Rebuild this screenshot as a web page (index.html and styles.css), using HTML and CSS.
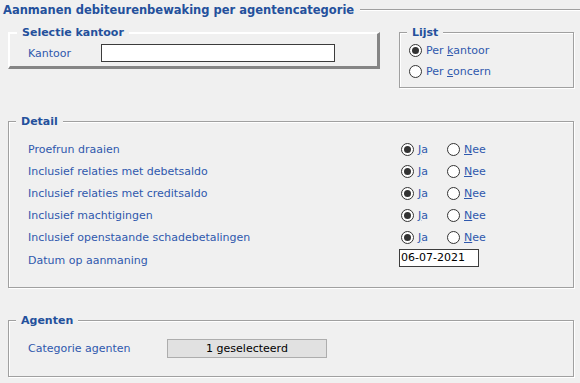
FILE: index.html
```html
<!DOCTYPE html>
<html>
<head>
  <meta charset="utf-8">
  <link rel="stylesheet" href="styles.css">
</head>
<body>
  <div class="window">
    <div class="title-row">
      <span class="title">Aanmanen debiteurenbewaking per agentencategorie</span>
      <span class="title-line"></span>
    </div>

    <div class="top-row">
      <fieldset class="raised selectie">
        <legend>Selectie kantoor</legend>
        <div class="row">
          <span class="label kantoor-label">Kantoor</span>
          <span class="text-input kantoor-input"></span>
        </div>
      </fieldset>

      <fieldset class="group lijst">
        <legend>Lijst</legend>
        <div class="lijst-row"><span class="radio checked"></span><span class="opt">Per <u>k</u>antoor</span></div>
        <div class="lijst-row"><span class="radio"></span><span class="opt">Per <u>c</u>oncern</span></div>
      </fieldset>
    </div>

    <fieldset class="group detail">
      <legend>Detail</legend>
      <div class="detail-row">
        <span class="label detail-label">Proefrun draaien</span>
        <span class="choice"><span class="radio checked"></span><span class="opt"><u>J</u>a</span></span>
        <span class="choice"><span class="radio"></span><span class="opt"><u>N</u>ee</span></span>
      </div>
      <div class="detail-row">
        <span class="label detail-label">Inclusief relaties met debetsaldo</span>
        <span class="choice"><span class="radio checked"></span><span class="opt"><u>J</u>a</span></span>
        <span class="choice"><span class="radio"></span><span class="opt"><u>N</u>ee</span></span>
      </div>
      <div class="detail-row">
        <span class="label detail-label">Inclusief relaties met creditsaldo</span>
        <span class="choice"><span class="radio checked"></span><span class="opt"><u>J</u>a</span></span>
        <span class="choice"><span class="radio"></span><span class="opt"><u>N</u>ee</span></span>
      </div>
      <div class="detail-row">
        <span class="label detail-label">Inclusief machtigingen</span>
        <span class="choice"><span class="radio checked"></span><span class="opt"><u>J</u>a</span></span>
        <span class="choice"><span class="radio"></span><span class="opt"><u>N</u>ee</span></span>
      </div>
      <div class="detail-row">
        <span class="label detail-label">Inclusief openstaande schadebetalingen</span>
        <span class="choice"><span class="radio checked"></span><span class="opt"><u>J</u>a</span></span>
        <span class="choice"><span class="radio"></span><span class="opt"><u>N</u>ee</span></span>
      </div>
      <div class="detail-row date-row">
        <span class="label detail-label">Datum op aanmaning</span>
        <span class="text-input date-input">06-07-2021</span>
      </div>
    </fieldset>

    <fieldset class="group agenten">
      <legend>Agenten</legend>
      <div class="agent-row">
        <span class="label agent-label">Categorie agenten</span>
        <span class="select-btn">1 geselecteerd</span>
      </div>
    </fieldset>
  </div>
</body>
</html>
```

FILE: styles.css
```css
* {
  margin: 0;
  padding: 0;
  box-sizing: border-box;
}

body {
  width: 580px;
  height: 383px;
  overflow: hidden;
  background: #f0f0f0;
  font-family: 'DejaVu Sans', Verdana, sans-serif;
  font-size: 11px;
  color: #2f58ad;
}

/* title */
.title-row {
  display: flex;
  align-items: center;
  height: 19px;
  padding-left: 3px;
}

.title {
  font-weight: bold;
  font-size: 11.5px;
  color: #24509c;
  white-space: nowrap;
}

.title-line {
  flex: 1;
  height: 2px;
  margin-left: 6px;
  border-top: 1px solid #a0a0a0;
  border-bottom: 1px solid #ffffff;
}

/* group boxes */
fieldset {
  min-width: 0;
}

legend {
  font-weight: bold;
  color: #24509c;
  line-height: 13px;
  padding: 0 5px;
  background: #f0f0f0;
}

.group {
  border: 1px solid #a0a0a0;
  box-shadow: inset 1px 1px 0 #ffffff, 1px 1px 0 #ffffff;
  padding: 0 8px 0 7px;
}

.raised {
  border-style: solid;
  border-width: 2px 3px 3px 2px;
  border-color: #ffffff #858585 #858585 #ffffff;
  padding: 0 7px;
}

.top-row {
  display: flex;
  align-items: flex-start;
  gap: 19px;
  padding-left: 8px;
  margin-top: 7px;
}

.selectie {
  width: 372px;
  padding-top: 5px;
  padding-bottom: 4px;
}

.row {
  display: flex;
  align-items: center;
  height: 18px;
  margin-left: 11px;
}

.kantoor-label {
  width: 73px;
}

.text-input {
  display: block;
  height: 18px;
  background: #ffffff;
  border: 1px solid #3c3c3c;
  color: #000000;
  line-height: 16px;
  padding-left: 1px;
}

.kantoor-input {
  width: 234px;
}

.lijst {
  width: 175px;
  padding-top: 1px;
  padding-bottom: 5px;
}

.lijst-row {
  display: flex;
  align-items: center;
  height: 21px;
  margin-left: 2px;
}

/* radio buttons */
.radio {
  width: 13px;
  height: 13px;
  border: 1px solid #333333;
  border-radius: 50%;
  background: #ffffff;
  margin-right: 4px;
  flex: none;
  display: flex;
  align-items: center;
  justify-content: center;
}

.radio.checked::after {
  content: '';
  width: 7px;
  height: 7px;
  border-radius: 50%;
  background: #333333;
}

.opt {
  color: #2f58ad;
}

/* detail */
.detail {
  margin: 27px 6px 0 8px;
  padding-top: 10px;
  padding-bottom: 16px;
}

.detail-row {
  display: flex;
  align-items: center;
  height: 22px;
  margin-left: 12px;
}

.date-row {
  margin-top: 1px;
}

.detail-label {
  width: 373px;
}

.choice {
  display: flex;
  align-items: center;
  width: 46px;
}

.date-input {
  width: 80px;
  margin-left: -2px;
  margin-top: -4px;
}

/* agenten */
.agenten {
  margin: 26px 6px 0 8px;
  padding-top: 10px;
  padding-bottom: 17px;
}

.agent-row {
  display: flex;
  align-items: center;
  height: 22px;
  margin-left: 12px;
}

.agent-label {
  width: 139px;
}

.select-btn {
  width: 160px;
  height: 19px;
  line-height: 17px;
  text-align: center;
  color: #000000;
  background: #e1e1e1;
  border: 1px solid #adadad;
}
```
